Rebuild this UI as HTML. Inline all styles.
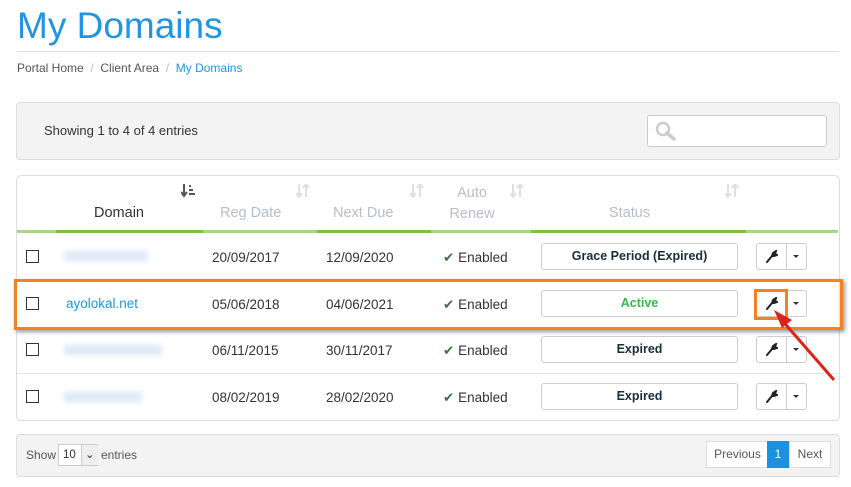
<!DOCTYPE html>
<html><head><style>
body{margin:0;width:851px;height:487px;background:#fff;font-family:"Liberation Sans",sans-serif;position:relative;overflow:hidden;color:#333}
.a{position:absolute}
.t{font-size:13.5px;color:#333}
.cb{position:absolute;width:11px;height:11px;border:1px solid #333;left:26px}
.st{position:absolute;left:541px;width:195px;height:25px;border:1px solid #ccc;border-radius:3px;text-align:center;font-weight:bold;font-size:12.5px;line-height:25px;color:#1a2e3b}
.bt{position:absolute;left:756px;width:49px;height:25px;border:1px solid #ccc;border-radius:3px}
.bt:after{content:"";position:absolute;left:29px;top:0;height:25px;border-left:1px solid #ccc}
.bt .c{position:absolute;left:36px;top:11px;border-left:3px solid transparent;border-right:3px solid transparent;border-top:3px solid #333}
.bt svg{position:absolute;left:9px;top:6px}
.hd{font-size:14.5px;color:#b7bec8;text-align:center}
.srt{position:absolute;top:184px}
.sep{position:absolute;left:17px;width:821px;height:1px;background:#e5e5e5}
</style></head><body>
<div class="a" style="left:17px;top:5px;font-size:37px;color:#2196e0">My Domains</div>
<div class="a" style="left:17px;top:51px;width:822px;height:1px;background:#ddd"></div>
<div class="a" style="left:17px;top:61px;font-size:12px;color:#555">Portal Home &nbsp;<span style="color:#bbb">/</span>&nbsp; Client Area &nbsp;<span style="color:#bbb">/</span>&nbsp; <span style="color:#2196e0">My Domains</span></div>
<div class="a" style="left:16px;top:102px;width:822px;height:56px;background:#f3f3f3;border:1px solid #ddd;border-radius:4px"></div>
<div class="a t" style="left:44px;top:123px;font-size:13px">Showing 1 to 4 of 4 entries</div>
<div class="a" style="left:647px;top:115px;width:178px;height:30px;background:#fff;border:1px solid #ccc;border-radius:3px"></div>
<svg class="a" style="left:655px;top:121px" width="22" height="20"><circle cx="8" cy="8" r="6" fill="none" stroke="#ccc" stroke-width="2.5"/><line x1="12" y1="12" x2="19" y2="18" stroke="#ccc" stroke-width="3.5" stroke-linecap="round"/></svg>
<div class="a" style="left:16px;top:175px;width:822px;height:244px;border:1px solid #ddd;border-radius:5px"></div>
<div class="a hd" style="left:66px;top:205px;width:106px;color:#333">Domain</div>
<div class="a hd" style="left:220px;top:205px;width:80px;text-align:left">Reg Date</div>
<div class="a hd" style="left:333px;top:205px;width:80px;text-align:left">Next Due</div>
<div class="a hd" style="left:448px;top:183px;width:48px;line-height:21px">Auto Renew</div>
<div class="a hd" style="left:609px;top:205px;text-align:left">Status</div>
<svg class="srt" style="left:181px" width="14" height="14"><path d="M3 0V11M0 8L3 12L6 8" stroke="#555" stroke-width="2" fill="none"/><rect x="8" y="1" width="2" height="2" fill="#555"/><rect x="8" y="5" width="4" height="2" fill="#555"/><rect x="8" y="9" width="6" height="2" fill="#555"/></svg>
<svg class="srt" style="left:296px" width="14" height="14"><path d="M3 0V12M0 9L3 13L6 9M10 13V1M7 4L10 0L13 4" stroke="#dde1e6" stroke-width="2" fill="none"/></svg>
<svg class="srt" style="left:410px" width="14" height="14"><path d="M3 0V12M0 9L3 13L6 9M10 13V1M7 4L10 0L13 4" stroke="#dde1e6" stroke-width="2" fill="none"/></svg>
<svg class="srt" style="left:510px" width="14" height="14"><path d="M3 0V12M0 9L3 13L6 9M10 13V1M7 4L10 0L13 4" stroke="#dde1e6" stroke-width="2" fill="none"/></svg>
<svg class="srt" style="left:725px" width="14" height="14"><path d="M3 0V12M0 9L3 13L6 9M10 13V1M7 4L10 0L13 4" stroke="#dde1e6" stroke-width="2" fill="none"/></svg>
<div class="a" style="left:17px;top:230px;width:821px;height:3px;background:#a8d58a"></div>
<div class="a" style="left:56px;top:230px;width:147px;height:3px;background:#7ac143"></div>
<div class="a" style="left:317px;top:230px;width:114px;height:3px;background:#7ac143"></div>
<div class="a" style="left:531px;top:230px;width:215px;height:3px;background:#7ac143"></div>
<div class="sep" style="top:280px"></div><div class="sep" style="top:327px"></div><div class="sep" style="top:373px"></div>

<div class="cb" style="top:250px"></div><div class="cb" style="top:297px"></div><div class="cb" style="top:343px"></div><div class="cb" style="top:390px"></div>
<div class="a" style="left:64px;top:251px;width:84px;height:10px;background:#dbe9f7;filter:blur(3px)"></div>
<div class="a" style="left:66px;top:296px;font-size:13.5px;color:#2196e0">ayolokal.net</div>
<div class="a" style="left:64px;top:345px;width:98px;height:10px;background:#dbe9f7;filter:blur(3px)"></div>
<div class="a" style="left:64px;top:392px;width:78px;height:10px;background:#dbe9f7;filter:blur(3px)"></div>

<div class="a t" style="left:212px;top:250px">20/09/2017</div><div class="a t" style="left:326px;top:250px">12/09/2020</div>
<div class="a t" style="left:212px;top:297px">05/06/2018</div><div class="a t" style="left:326px;top:297px">04/06/2021</div>
<div class="a t" style="left:212px;top:343px">06/11/2015</div><div class="a t" style="left:326px;top:343px">30/11/2017</div>
<div class="a t" style="left:212px;top:390px">08/02/2019</div><div class="a t" style="left:326px;top:390px">28/02/2020</div>
<div class="a t" style="left:443px;top:250px"><span style="color:#3c763d">✔</span> Enabled</div>
<div class="a t" style="left:443px;top:297px"><span style="color:#3c763d">✔</span> Enabled</div>
<div class="a t" style="left:443px;top:343px"><span style="color:#3c763d">✔</span> Enabled</div>
<div class="a t" style="left:443px;top:390px"><span style="color:#3c763d">✔</span> Enabled</div>

<div class="st" style="top:243px">Grace Period (Expired)</div>
<div class="st" style="top:290px;color:#3bb54a">Active</div>
<div class="st" style="top:336px">Expired</div>
<div class="st" style="top:383px">Expired</div>

<div class="bt" style="top:243px"><svg width="12" height="13" viewBox="0 0 12 13"><path d="M1 12 L6 6 M6 6 L7 3 L10 1 L9 4 L11 5 L8 6 Z" stroke="#222" stroke-width="2" fill="#222" stroke-linecap="round"/></svg><i class="c"></i></div>
<div class="bt" style="top:290px"><svg width="12" height="13" viewBox="0 0 12 13"><path d="M1 12 L6 6 M6 6 L7 3 L10 1 L9 4 L11 5 L8 6 Z" stroke="#222" stroke-width="2" fill="#222" stroke-linecap="round"/></svg><i class="c"></i></div>
<div class="bt" style="top:336px"><svg width="12" height="13" viewBox="0 0 12 13"><path d="M1 12 L6 6 M6 6 L7 3 L10 1 L9 4 L11 5 L8 6 Z" stroke="#222" stroke-width="2" fill="#222" stroke-linecap="round"/></svg><i class="c"></i></div>
<div class="bt" style="top:383px"><svg width="12" height="13" viewBox="0 0 12 13"><path d="M1 12 L6 6 M6 6 L7 3 L10 1 L9 4 L11 5 L8 6 Z" stroke="#222" stroke-width="2" fill="#222" stroke-linecap="round"/></svg><i class="c"></i></div>

<div class="a" style="left:14px;top:279px;width:823px;height:45px;border:3px solid #f58220;box-shadow:2px 2px 4px rgba(0,0,0,.4)"></div>
<div class="a" style="left:754px;top:289px;width:28px;height:25px;border:3px solid #f58220"></div>
<svg class="a" style="left:0;top:0" width="851" height="487"><line x1="834" y1="380" x2="780" y2="318" stroke="#e0201b" stroke-width="3"/><polygon points="774,310 792,320 782,328" fill="#e0201b"/></svg>

<div class="a" style="left:16px;top:434px;width:822px;height:41px;background:#f3f3f3;border:1px solid #ddd;border-radius:4px"></div>
<div class="a" style="left:26px;top:448px;font-size:12px;color:#555">Show</div>
<div class="a" style="left:58px;top:444px;width:38px;height:20px;border:1px solid #ccc;background:#fff;font-size:11.5px;line-height:20px;text-indent:4px">10<span style="position:absolute;left:22px;top:0;width:16px;height:20px;border-left:1px solid #ccc;background:#eee;text-indent:3px">⌄</span></div>
<div class="a" style="left:101px;top:448px;font-size:12px;color:#555">entries</div>
<div class="a" style="left:706px;top:441px;width:61px;height:25px;border:1px solid #ddd;background:#fff;font-size:12px;line-height:25px;text-align:center;color:#555">Previous</div>
<div class="a" style="left:767px;top:441px;width:22px;height:27px;background:#1e90e0;color:#fff;font-size:12px;line-height:27px;text-align:center">1</div>
<div class="a" style="left:789px;top:441px;width:40px;height:25px;border:1px solid #ddd;background:#fff;font-size:12px;line-height:25px;text-align:center;color:#555">Next</div>
</body></html>
